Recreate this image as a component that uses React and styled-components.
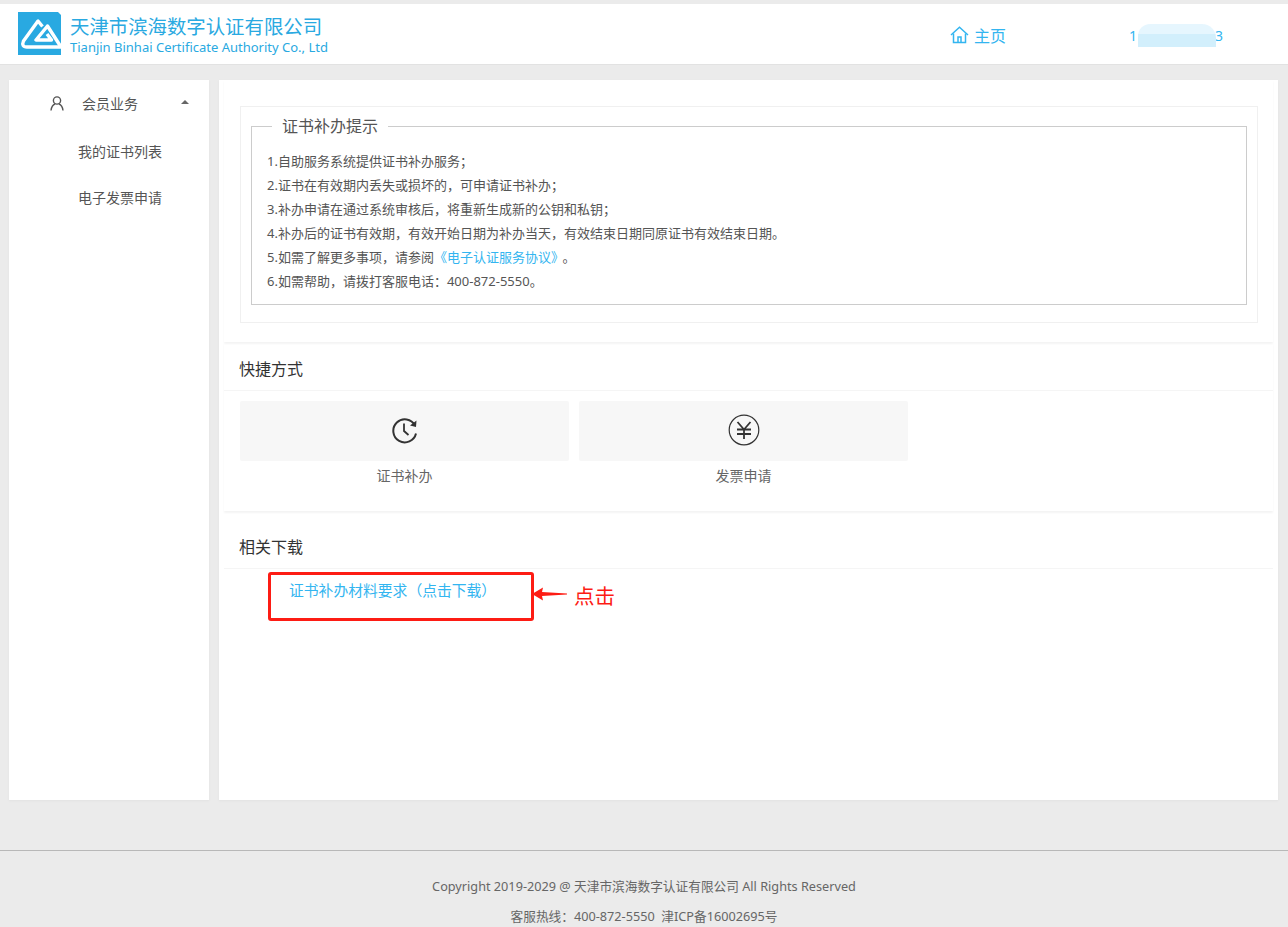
import React from 'react';
import styled, { createGlobalStyle } from 'styled-components';

const GlobalStyle = createGlobalStyle`
  html, body {
    margin: 0;
    padding: 0;
    background: #ebebeb;
    font-family: "Noto Sans", "Noto Sans CJK SC", sans-serif;
    color: #555;
  }
  * { box-sizing: border-box; }
`;

const Page = styled.div`
  position: relative;
  width: 1288px;
  height: 927px;
  overflow: hidden;
  padding-top: 4px;
`;

const Header = styled.header`
  height: 61px;
  background: #fff;
  border-bottom: 1px solid #e2e2e2;
  display: flex;
  align-items: center;
  padding: 0 0 1px 18px;
`;

const Brand = styled.div`
  display: flex;
  align-items: center;
  gap: 9px;
  width: 932px;
  color: #29a9e1;
`;

const BrandText = styled.div`
  display: flex;
  flex-direction: column;
  margin-top: 3px;
`;

const BrandName = styled.div`
  font-size: 19.4px;
  line-height: 24px;
  white-space: nowrap;
`;

const BrandEn = styled.div`
  font-size: 13px;
  line-height: 17px;
  white-space: nowrap;
`;

const HomeLink = styled.a`
  display: flex;
  align-items: center;
  gap: 5px;
  width: 179px;
  margin-top: 2px;
  font-size: 16px;
  color: #33b5f0;
`;

const Account = styled.div`
  position: relative;
  width: 94px;
  margin-top: 3px;
  display: flex;
  justify-content: space-between;
  font-size: 14px;
  color: #33b5f0;
`;

const Blur = styled.div`
  position: absolute;
  left: 9px;
  top: -2px;
  width: 78px;
  height: 23px;
  border-radius: 12px 14px 0 0;
  background: linear-gradient(#e6f6fe 45%, #d2effc 45%);
`;

const Body = styled.div`
  display: flex;
  gap: 10px;
  padding: 15px 10px 0 9px;
`;

const Sidebar = styled.aside`
  width: 200px;
  height: 720px;
  background: #fff;
  box-shadow: 0 1px 2px #e2e2e2;
`;

const MenuHead = styled.div`
  display: flex;
  align-items: center;
  height: 46px;
  margin-bottom: 3px;
  padding-left: 41px;
  font-size: 14px;
  color: #555;
`;

const MenuLabel = styled.span`
  margin-left: 18px;
  width: 99px;
`;

const Caret = styled.i`
  width: 0;
  height: 0;
  border-left: 4px solid transparent;
  border-right: 4px solid transparent;
  border-bottom: 4px solid #666;
  margin-bottom: 2px;
`;

const MenuItem = styled.div`
  height: 46px;
  line-height: 46px;
  padding-left: 69px;
  font-size: 14px;
  color: #555;
`;

const Main = styled.main`
  width: 1059px;
  height: 720px;
  background: #fff;
  box-shadow: 0 1px 2px #e2e2e2;
  display: flex;
  flex-direction: column;
`;

const NoticeWrap = styled.div`
  height: 262px;
  margin: 0 5px;
  padding: 26px 15px 0 16px;
  box-shadow: 0 2px 2px #f4f4f4;
`;

const NoticeBox = styled.div`
  height: 217px;
  border: 1px solid #f0f0f0;
  padding: 8px 10px 0;
`;

const Fieldset = styled.fieldset`
  margin: 0;
  height: 190px;
  border: 1px solid #ccc;
  padding: 12px 15px 0;
`;

const Legend = styled.legend`
  margin-left: 5px;
  padding: 0 10px;
  font-size: 16px;
  line-height: 22px;
  color: #555;
`;

const NoticeLine = styled.p`
  margin: 0;
  font-size: 13px;
  line-height: 24px;
  color: #555;
  white-space: pre;
`;

const TextLink = styled.a`
  color: #33b5f0;
  margin-right: 5px;
`;

const Section = styled.section`
  height: ${p => p.$height}px;
  margin: ${p => p.$top}px 5px 0;
  box-shadow: ${p => (p.$shadow ? '0 2px 2px #f4f4f4' : 'none')};
`;

const SectionTitle = styled.div`
  height: 48px;
  padding: 2px 0 0 15px;
  display: flex;
  align-items: center;
  font-size: 16px;
  color: #333;
  border-bottom: 1px solid #f5f5f5;
`;

const Shortcuts = styled.div`
  display: flex;
  gap: 10px;
  padding: 10px 0 0 16px;
`;

const Shortcut = styled.div`
  width: 329px;
  display: flex;
  flex-direction: column;
  align-items: center;
  font-size: 14px;
  color: #666;
`;

const ShortcutIcon = styled.div`
  width: 100%;
  height: 60px;
  padding-bottom: 2px;
  background: #f7f7f7;
  border-radius: 2px;
  display: flex;
  align-items: center;
  justify-content: center;
  margin-bottom: 5px;
  line-height: 0;
`;

const ShortcutLabel = styled.div`
  line-height: 20px;
`;

const DownloadRow = styled.div`
  padding: 11px 0 0 65px;
  font-size: 14.8px;
  line-height: 20px;
  color: #33b5f0;
`;

const RedBox = styled.div`
  position: absolute;
  left: 268px;
  top: 572px;
  width: 266px;
  height: 49px;
  border: 3px solid #fd1c14;
  border-radius: 3px;
`;

const Arrow = styled.svg`
  position: absolute;
  left: 532px;
  top: 587px;
`;

const ClickNote = styled.div`
  position: absolute;
  left: 574px;
  top: 583px;
  font-size: 20.5px;
  line-height: 27px;
  color: #fd1c14;
`;

const Footer = styled.footer`
  margin-top: 50px;
  border-top: 1px solid #b8b8b8;
  padding-top: 20px;
  text-align: center;
  font-size: 12.7px;
  line-height: 30px;
  color: #666;
`;

const FooterLine = styled.div`
  white-space: pre;
`;

const lines = [
  '1.自助服务系统提供证书补办服务；',
  '2.证书在有效期内丢失或损坏的，可申请证书补办；',
  '3.补办申请在通过系统审核后，将重新生成新的公钥和私钥；',
  '4.补办后的证书有效期，有效开始日期为补办当天，有效结束日期同原证书有效结束日期。',
];

const Logo = () => (
  <svg width="43" height="43" viewBox="0 0 43 43">
    <path d="M0 0h40l3 3v40H0z" fill="#29a9e1" />
    <g fill="none" stroke="#fff" strokeWidth="3.4" strokeLinejoin="round">
      <path d="M24.5 14.5 L20 9 L5.5 29 Q3 35 9 35 H43" />
      <path d="M43 35 L29.5 14 L18 28 H33.5 L29 22" />
    </g>
  </svg>
);

const HomeIcon = () => (
  <svg width="19" height="18" viewBox="0 0 19 18" fill="none" stroke="#33b5f0" strokeWidth="1.5">
    <path d="M1 9 L9.5 1.2 L18 9" />
    <path d="M3.5 7.5V16.5H15.5V7.5" />
    <path d="M8 16.5V11H11V16.5" />
  </svg>
);

const UserIcon = () => (
  <svg width="14" height="15" viewBox="0 0 14 15" fill="none" stroke="#555" strokeWidth="1.4">
    <circle cx="7" cy="4.5" r="3.6" />
    <path d="M1 14.5 C1.5 10.5 3.5 8.5 5 8 M13 14.5 C12.5 10.5 10.5 8.5 9 8" />
  </svg>
);

const RenewIcon = () => (
  <svg width="28" height="28" viewBox="0 0 28 28" fill="none" stroke="#333" strokeWidth="2">
    <path d="M24 9.5 A11.5 11.5 0 1 0 25 17.5" />
    <path d="M25.5 4.5 L25 11 L19 9.5z" fill="#333" stroke="none" />
    <path d="M13 7.5V15L17.5 19" strokeWidth="1.8" />
  </svg>
);

const YuanIcon = () => (
  <svg width="32" height="32" viewBox="0 0 32 32" fill="none" stroke="#333">
    <circle cx="16" cy="16" r="14.8" strokeWidth="1.2" />
    <path d="M9.5 8 L16 15.5 L22.5 8 M16 15.5V25 M9 15.5H23 M9 20H23" strokeWidth="1.8" />
  </svg>
);

const App = () => (
  <Page>
    <GlobalStyle />
    <Header>
      <Brand>
        <Logo />
        <BrandText>
          <BrandName>天津市滨海数字认证有限公司</BrandName>
          <BrandEn>Tianjin Binhai Certificate Authority Co., Ltd</BrandEn>
        </BrandText>
      </Brand>
      <HomeLink>
        <HomeIcon />
        主页
      </HomeLink>
      <Account>
        <span>1</span>
        <span>3</span>
        <Blur />
      </Account>
    </Header>

    <Body>
      <Sidebar>
        <MenuHead>
          <UserIcon />
          <MenuLabel>会员业务</MenuLabel>
          <Caret />
        </MenuHead>
        <MenuItem>我的证书列表</MenuItem>
        <MenuItem>电子发票申请</MenuItem>
      </Sidebar>

      <Main>
        <NoticeWrap>
          <NoticeBox>
            <Fieldset>
              <Legend>证书补办提示</Legend>
              {lines.map(line => (
                <NoticeLine key={line}>{line}</NoticeLine>
              ))}
              <NoticeLine>
                5.如需了解更多事项，请参阅<TextLink>《电子认证服务协议》</TextLink>。
              </NoticeLine>
              <NoticeLine>6.如需帮助，请拨打客服电话：400-872-5550。</NoticeLine>
            </Fieldset>
          </NoticeBox>
        </NoticeWrap>

        <Section $height={168} $top={1} $shadow>
          <SectionTitle>快捷方式</SectionTitle>
          <Shortcuts>
            <Shortcut>
              <ShortcutIcon>
                <RenewIcon />
              </ShortcutIcon>
              <ShortcutLabel>证书补办</ShortcutLabel>
            </Shortcut>
            <Shortcut>
              <ShortcutIcon>
                <YuanIcon />
              </ShortcutIcon>
              <ShortcutLabel>发票申请</ShortcutLabel>
            </Shortcut>
          </Shortcuts>
        </Section>

        <Section $height={279} $top={10}>
          <SectionTitle>相关下载</SectionTitle>
          <DownloadRow>证书补办材料要求（点击下载）</DownloadRow>
        </Section>
      </Main>
    </Body>

    <Footer>
      <FooterLine>Copyright 2019-2029 @ 天津市滨海数字认证有限公司 All Rights Reserved</FooterLine>
      <FooterLine>客服热线：400-872-5550  津ICP备16002695号</FooterLine>
    </Footer>

    <RedBox />
    <Arrow width="36" height="14" viewBox="0 0 36 14">
      <path d="M0 7 L11 0.5 L10 5 L35 6.5 V7.5 L10 9 L11 13.5z" fill="#fd1c14" />
    </Arrow>
    <ClickNote>点击</ClickNote>
  </Page>
);

export default App;
